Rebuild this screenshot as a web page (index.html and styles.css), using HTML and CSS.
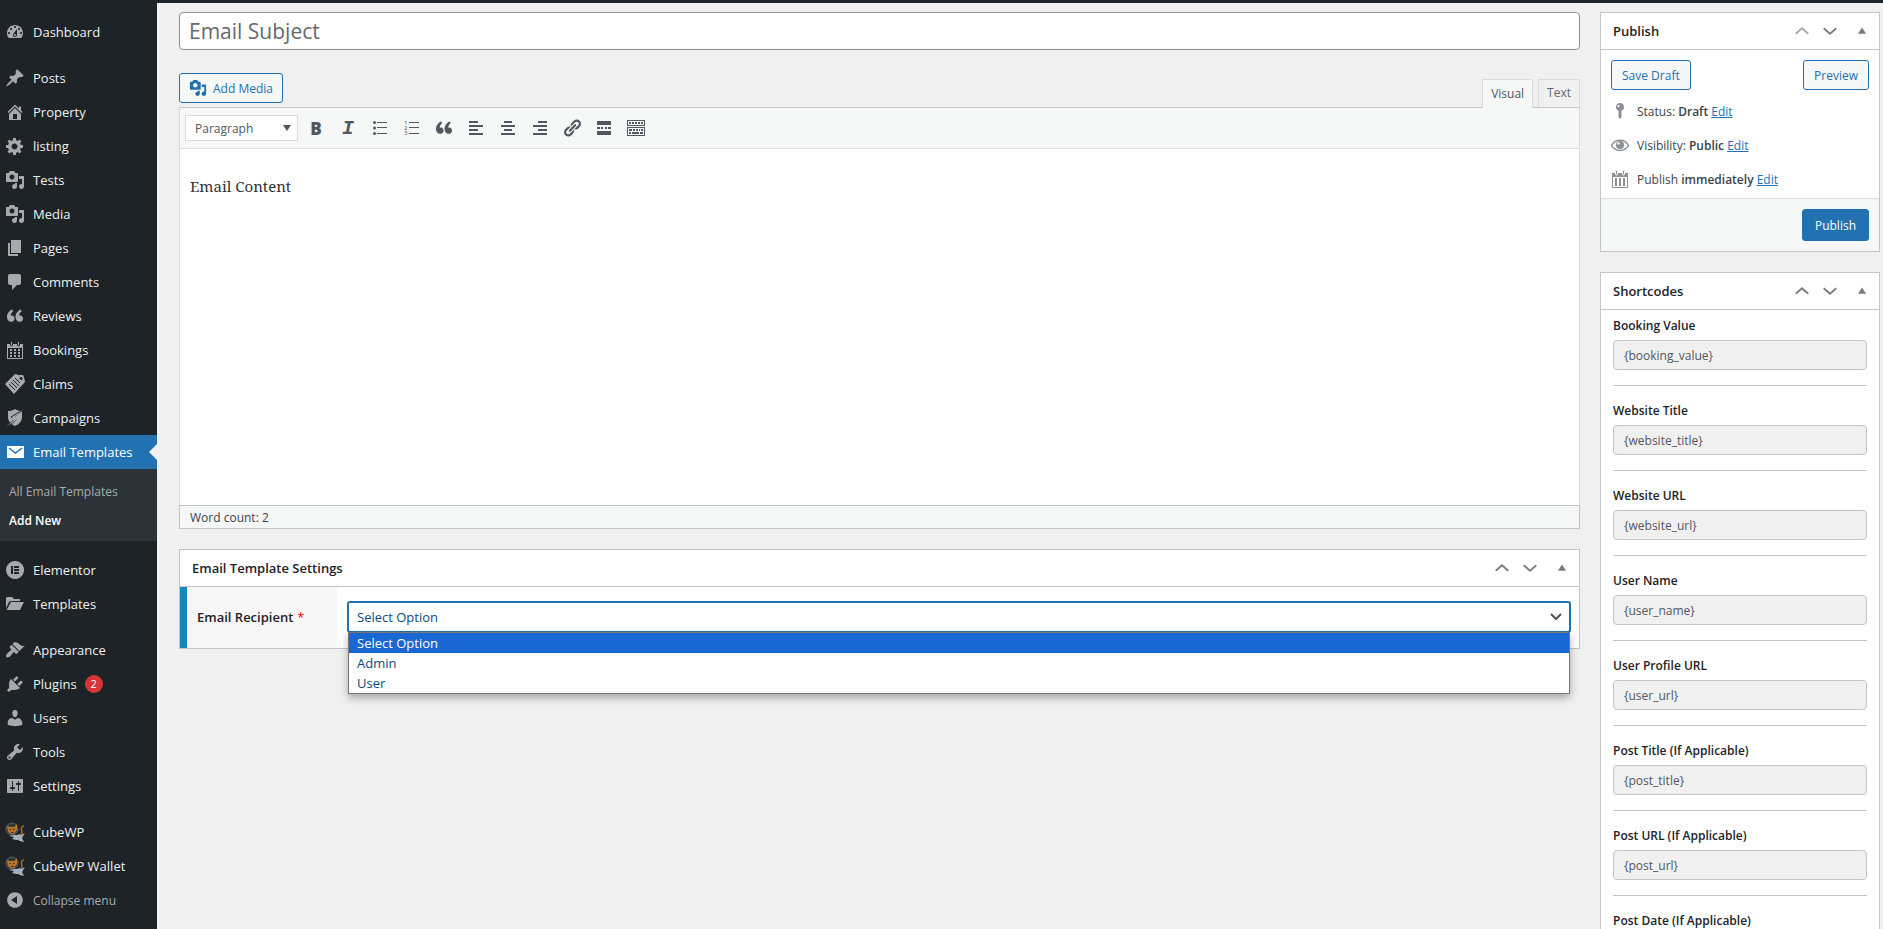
FILE: index.html
```html
<!DOCTYPE html>
<html lang="en">
<head>
    <meta charset="UTF-8">
    <meta name="viewport" content="width=device-width, initial-scale=1.0">
    <title>Add New Email Template</title>
    <link rel="stylesheet" href="styles.css">
</head>
<body>

<!-- shared icons -->
<svg class="sprite" aria-hidden="true">
    <symbol id="i-media" viewBox="0 0 20 20"><path d="M13 11V4c0-.55-.45-1-1-1h-1.67L9 1H5L3.67 3H2c-.55 0-1 .45-1 1v7c0 .55.45 1 1 1h10c.55 0 1-.45 1-1zM7 4.5c1.38 0 2.5 1.12 2.5 2.5S8.38 9.5 7 9.5 4.5 8.38 4.5 7 5.62 4.5 7 4.5zM14 6h5v10.5c0 1.38-1.12 2.5-2.5 2.5S14 17.88 14 16.5s1.12-2.5 2.5-2.5c.17 0 .34.02.5.05V9h-3V6zm-4 8.05V13h2v3.5c0 1.38-1.12 2.5-2.5 2.5S7 17.88 7 16.5 8.12 14 9.5 14c.17 0 .34.02.5.05z"/></symbol>
    <symbol id="i-quote" viewBox="0 0 20 20"><path d="M9.5 12.7c0-.87-.24-1.61-.72-2.22-.73-.92-2.14-1.03-2.96-.85-.3-1.6.9-3.5 2.6-4.4L7 3.6C4 5 1.7 8 2 11.6c.3 2.6 1.8 4.2 4 4.2 1 0 1.83-.29 2.48-.88.66-.59 1.02-1.22 1.02-2.22zm8.5 0c0-.87-.24-1.61-.72-2.22-.73-.92-2.14-1.03-2.96-.85-.3-1.6.9-3.5 2.6-4.4L15.5 3.6c-3 1.4-5.3 4.4-5 8 .3 2.6 1.8 4.2 4 4.2 1 0 1.83-.29 2.48-.88.66-.59 1.02-1.22 1.02-2.22z"/></symbol>
    <symbol id="i-cat" viewBox="0 0 20 20">
        <path d="M0 12l4 2 3-1 5 0 3-1 1 1 4-2-3 5 2 4-4-1-2-1-2 0-4-1 2-2-5-1-4-2z" fill="#a5b1ba"/>
        <circle cx="7" cy="7" r="6" fill="#34373b" stroke="#5c6166"/>
        <path d="M2 4l3 1h4l3-3v6l-3 4H6L3 10z" fill="#b9752c"/>
        <path d="M4.5 7.5L6 8M9.5 7L8 8M6.5 10.5h2" stroke="#2b1a0a"/>
        <path d="M16 13c2-2 0-5 .5-7 .3-1.5 1-2 2.5-2" fill="none" stroke="#a86d2c" stroke-width="1.5"/>
    </symbol>
    <symbol id="i-up" viewBox="0 0 20 20"><path d="M3 13l7-6 7 6" fill="none" stroke="currentColor" stroke-width="2"/></symbol>
    <symbol id="i-down" viewBox="0 0 20 20"><path d="M3 7l7 6 7-6" fill="none" stroke="currentColor" stroke-width="2"/></symbol>
    <symbol id="i-toggle" viewBox="0 0 20 20"><path d="M5.5 13L10 6l4.5 7z"/></symbol>
</svg>

<div class="admin">
    <div class="admin-bar"></div>

    <nav class="menu" aria-label="Main menu">
        <ul class="menu-list">
            <li><a href="#"><svg class="icon" viewBox="0 0 20 20"><path fill-rule="evenodd" d="M3.76 16h12.48c1.1-1.37 1.76-3.11 1.76-5 0-4.42-3.58-8-8-8s-8 3.58-8 8c0 1.89.66 3.63 1.76 5zM10 4c.55 0 1 .45 1 1s-.45 1-1 1-1-.45-1-1 .45-1 1-1zM6 6c.55 0 1 .45 1 1s-.45 1-1 1-1-.45-1-1 .45-1 1-1zm8 0c.55 0 1 .45 1 1s-.45 1-1 1-1-.45-1-1 .45-1 1-1zm-5.37 5.55L12 7v6c0 1.1-.9 2-2 2s-2-.9-2-2c0-.57.24-1.08.63-1.45zM4 10c.55 0 1 .45 1 1s-.45 1-1 1-1-.45-1-1 .45-1 1-1zm12 0c.55 0 1 .45 1 1s-.45 1-1 1-1-.45-1-1 .45-1 1-1zm-5 3c0-.55-.45-1-1-1s-1 .45-1 1 .45 1 1 1 1-.45 1-1z"/></svg>Dashboard</a></li>
            <li class="separator"></li>
            <li><a href="#"><svg class="icon" viewBox="0 0 20 20"><path d="M10.44 3.02l1.82-1.82 6.36 6.35-1.83 1.82c-1.05-.68-2.48-.57-3.41.36l-.75.75c-.92.93-1.04 2.35-.35 3.41l-1.83 1.82-2.41-2.41-2.8 2.79c-.42.42-3.38 2.71-3.8 2.29s1.86-3.39 2.28-3.81l2.79-2.79L4.1 9.36l1.83-1.82c1.05.69 2.48.57 3.4-.36l.75-.75c.93-.92 1.05-2.35.36-3.41z"/></svg>Posts</a></li>
            <li><a href="#"><svg class="icon" viewBox="0 0 20 20"><path fill-rule="evenodd" d="M16 8.5l1.53 1.53-1.06 1.06L10 4.6l-6.47 6.49-1.06-1.06L10 2.5l4 4v-2h2v4zm-6-2.46l6 5.99V18H4v-5.97zM12 17v-5H8v5h4z"/></svg>Property</a></li>
            <li><a href="#"><svg class="icon" viewBox="0 0 20 20"><path d="M18 12h-2.18c-.17.7-.44 1.35-.81 1.93l1.54 1.54-2.1 2.1-1.54-1.54c-.58.36-1.23.63-1.91.79V19H8v-2.18c-.68-.16-1.33-.43-1.91-.79l-1.54 1.54-2.12-2.12 1.54-1.54c-.36-.58-.63-1.23-.79-1.91H1V9.03h2.17c.16-.7.44-1.35.8-1.94L2.43 5.55l2.1-2.1 1.54 1.54c.58-.37 1.24-.64 1.93-.81V2h3v2.18c.68.16 1.33.43 1.91.79l1.54-1.54 2.12 2.12-1.54 1.54c.36.59.64 1.24.8 1.94H18V12zm-8.5 1.5c1.66 0 3-1.34 3-3s-1.34-3-3-3-3 1.34-3 3 1.34 3 3 3z"/></svg>listing</a></li>
            <li><a href="#"><svg class="icon"><use href="#i-media"/></svg>Tests</a></li>
            <li><a href="#"><svg class="icon"><use href="#i-media"/></svg>Media</a></li>
            <li><a href="#"><svg class="icon" viewBox="0 0 20 20"><path d="M6 15V2h10v13H6zm-1 1h8v2H3V5h2v11z"/></svg>Pages</a></li>
            <li><a href="#"><svg class="icon" viewBox="0 0 20 20"><path d="M5 2h9c1.1 0 2 .9 2 2v7c0 1.1-.9 2-2 2h-2l-5 5v-5H5c-1.1 0-2-.9-2-2V4c0-1.1.9-2 2-2z"/></svg>Comments</a></li>
            <li><a href="#"><svg class="icon"><use href="#i-quote"/></svg>Reviews</a></li>
            <li><a href="#"><svg class="icon" viewBox="0 0 20 20"><path fill-rule="evenodd" d="M2 4h16v15H2zm1 4v10h14V8zm2 1h2v2H5zm4 0h2v2H9zm4 0h2v2h-2zM5 12h2v2H5zm4 0h2v2H9zm4 0h2v2h-2zM5 15h2v2H5zm4 0h2v2H9zm4 0h2v2h-2z"/><rect x="5.5" y="1.5" width="2" height="4.5" rx="1" stroke="#1d2327"/><rect x="12.5" y="1.5" width="2" height="4.5" rx="1" stroke="#1d2327"/></svg>Bookings</a></li>
            <li><a href="#"><svg class="icon" viewBox="0 0 20 20"><path fill-rule="evenodd" d="M0 10l9-9 2-1 2 1h5l1 2 1 5L9 20zM16 3a1.5 1.5 0 1 0 .1 0z"/><path d="M4 10l6 6M6 8l6 6M8 6l6 6M10 4l5 5" stroke="#1d2327"/></svg>Claims</a></li>
            <li><a href="#"><svg class="icon" viewBox="0 0 20 20"><path d="M10 1c2 1.5 4.5 2 7 2v6c0 4-3 7.5-7 9-4-1.5-7-5-7-9V3c2.5 0 5-.5 7-2z"/><path d="M18 2L8 10l4 1-9 8M16 3L6 9l4 2-8 7" fill="none" stroke="#1d2327"/><path d="M19 1l-9 8 4 1L1 19l8-7-4-1z"/></svg>Campaigns</a></li>
            <li class="current">
                <a href="#"><svg class="icon" viewBox="0 0 20 20"><path d="M2 4h17v12H2z"/><path d="M4 6l6.5 5L17 6" fill="none" stroke="#2271b1" stroke-width="1.5"/></svg>Email Templates</a>
                <ul class="submenu">
                    <li><a href="#">All Email Templates</a></li>
                    <li><a class="active" href="#" aria-current="page">Add New</a></li>
                </ul>
            </li>
            <li class="separator"></li>
            <li><a href="#"><svg class="icon" viewBox="0 0 20 20"><path fill-rule="evenodd" d="M10 1a9 9 0 1 0 .1 0zM6 6h2v8H6zm3 0h5v2H9zm0 3h5v2H9zm0 3h5v2H9z"/></svg>Elementor</a></li>
            <li><a href="#"><svg class="icon" viewBox="0 0 20 20"><path d="M1 14V4l1-1h5l2 2h6v2H6l-2 1z"/><path d="M1.5 16L6 8h13l-4 8z"/></svg>Templates</a></li>
            <li class="separator"></li>
            <li><a href="#"><svg class="icon" viewBox="0 0 20 20"><path d="M14.48 11.06L7.41 3.99l1.5-1.5c.5-.56 2.3-.47 3.51.32 1.21.8 1.43 1.28 2.91 2.1 1.18.64 2.45 1.26 4.45.85zm-.71.71L6.7 4.7 4.93 6.47c-.39.39-.39 1.02 0 1.41l1.06 1.06c.39.39.39 1.03 0 1.42-.6.6-1.43 1.11-2.21 1.69-.35.26-.7.53-1.01.84C1.43 14.23.4 16.08 1.4 17.07c.99 1 2.84-.03 4.18-1.36.31-.31.58-.66.85-1.02.57-.78 1.08-1.61 1.69-2.21.39-.39 1.02-.39 1.41 0l1.06 1.06c.39.39 1.02.39 1.41 0z"/></svg>Appearance</a></li>
            <li><a href="#"><svg class="icon" viewBox="0 0 20 20"><path d="M13.11 4.36L9.87 7.6 8 5.73l3.24-3.24c.35-.34 1.05-.2 1.56.32.52.51.66 1.21.31 1.55zm-8 1.77l.91-1.12 9.01 9.01-1.19.84c-.71.71-2.63 1.16-3.82 1.16H6.14L4.9 17.26c-.59.59-1.54.59-2.12 0-.59-.58-.59-1.53 0-2.12l1.24-1.24v-3.88c0-1.13.4-3.19 1.09-3.89zm7.26 3.97l3.24-3.24c.34-.35 1.04-.21 1.55.31.52.51.66 1.21.31 1.55l-3.24 3.25z"/></svg>Plugins <span class="count">2</span></a></li>
            <li><a href="#"><svg class="icon" viewBox="0 0 20 20"><path d="M10 9.25c-2.27 0-2.73-3.44-2.73-3.44C7 4.02 7.82 2 9.97 2c2.16 0 2.98 2.02 2.71 3.81 0 0-.41 3.44-2.68 3.44zm0 2.57L12.72 10c2.39 0 4.52 2.33 4.52 4.53v2.49s-3.65 1.13-7.24 1.13c-3.65 0-7.24-1.13-7.24-1.13v-2.49c0-2.25 1.94-4.48 4.47-4.48z"/></svg>Users</a></li>
            <li><a href="#"><svg class="icon" viewBox="0 0 20 20"><path d="M16.68 9.77c-1.34 1.34-3.3 1.67-4.95.99l-5.41 6.52c-.99.99-2.59.99-3.58 0s-.99-2.59 0-3.57l6.52-5.42c-.68-1.65-.35-3.61.99-4.95 1.28-1.28 3.12-1.62 4.72-1.06l-2.89 2.89 2.82 2.82 2.86-2.87c.53 1.58.18 3.39-1.08 4.65zM3.81 16.21c.4.39 1.04.39 1.43 0 .4-.4.4-1.04 0-1.43-.39-.4-1.03-.4-1.43 0-.39.39-.39 1.03 0 1.43z"/></svg>Tools</a></li>
            <li><a href="#"><svg class="icon" viewBox="0 0 20 20"><path d="M18 16V4c0-.55-.45-1-1-1H3c-.55 0-1 .45-1 1v12c0 .55.45 1 1 1h14c.55 0 1-.45 1-1zM8 11h1c.55 0 1 .45 1 1s-.45 1-1 1H8v1.5c0 .28-.22.5-.5.5s-.5-.22-.5-.5V13H6c-.55 0-1-.45-1-1s.45-1 1-1h1V5.5c0-.28.22-.5.5-.5s.5.22.5.5V11zm5-2h-1c-.55 0-1-.45-1-1s.45-1 1-1h1V5.5c0-.28.22-.5.5-.5s.5.22.5.5V7h1c.55 0 1 .45 1 1s-.45 1-1 1h-1v5.5c0 .28-.22.5-.5.5s-.5-.22-.5-.5V9z"/></svg>Settings</a></li>
            <li class="separator"></li>
            <li><a href="#"><svg class="icon"><use href="#i-cat"/></svg>CubeWP</a></li>
            <li><a href="#"><svg class="icon"><use href="#i-cat"/></svg>CubeWP Wallet</a></li>
            <li><button class="collapse" type="button"><svg class="icon" viewBox="0 0 20 20"><path d="M10 2.16c-4.33 0-7.84 3.51-7.84 7.84s3.51 7.84 7.84 7.84 7.84-3.51 7.84-7.84S14.33 2.16 10 2.16zm2 11.72L6.12 9.96 12 6.04v7.84z"/></svg>Collapse menu</button></li>
        </ul>
    </nav>

    <main class="content">
        <div class="main-col">
            <input class="title-input" type="text" placeholder="Email Subject" aria-label="Email Subject">

            <div class="editor">
                <div class="editor-top">
                    <button class="button add-media" type="button"><svg class="icon"><use href="#i-media"/></svg>Add Media</button>
                    <div class="tabs">
                        <button class="tab tab-active" type="button">Visual</button>
                        <button class="tab" type="button">Text</button>
                    </div>
                </div>
                <div class="toolbar">
                    <button class="format" type="button">Paragraph <span class="caret"></span></button>
                    <button class="tool bold" type="button" aria-label="Bold">B</button>
                    <button class="tool italic" type="button" aria-label="Italic">I</button>
                    <button class="tool" type="button" aria-label="Bulleted list"><svg viewBox="0 0 20 20"><circle cx="4.5" cy="4.5" r="1.5"/><circle cx="4.5" cy="10" r="1.5"/><circle cx="4.5" cy="15.5" r="1.5"/><path d="M7 4h10v1H7zM7 9h10v1H7zM7 15h10v1H7z"/></svg></button>
                    <button class="tool" type="button" aria-label="Numbered list"><svg viewBox="0 0 20 20"><text x="2" y="7" font-size="6">1</text><text x="2" y="12" font-size="6">2</text><text x="2" y="17" font-size="6">3</text><path d="M7 4h10v1H7zM7 9h10v1H7zM7 15h10v1H7z"/></svg></button>
                    <button class="tool" type="button" aria-label="Blockquote"><svg><use href="#i-quote"/></svg></button>
                    <button class="tool" type="button" aria-label="Align left"><svg viewBox="0 0 20 20"><path d="M3 3h9v2H3zM3 7h14v2H3zM3 11h9v2H3zM3 15h14v2H3z"/></svg></button>
                    <button class="tool" type="button" aria-label="Align center"><svg viewBox="0 0 20 20"><path d="M6 3h8v2H6zM3 7h14v2H3zM6 11h8v2H6zM3 15h14v2H3z"/></svg></button>
                    <button class="tool" type="button" aria-label="Align right"><svg viewBox="0 0 20 20"><path d="M8 3h9v2H8zM3 7h14v2H3zM8 11h9v2H8zM3 15h14v2H3z"/></svg></button>
                    <button class="tool" type="button" aria-label="Insert link"><svg viewBox="0 0 20 20"><path d="M17.74 2.76c1.68 1.69 1.68 4.41 0 6.1l-1.53 1.52c-1.12 1.12-2.7 1.47-4.14 1.09l2.62-2.61.76-.77.76-.76c.84-.84.84-2.2 0-3.04-.84-.85-2.2-.85-3.04 0l-.77.76-3.38 3.38c-.37-1.44-.02-3.02 1.1-4.14l1.52-1.53c1.69-1.68 4.42-1.68 6.1 0zM8.59 13.43l5.34-5.34c.42-.42.42-1.1 0-1.52-.44-.43-1.13-.39-1.53 0l-5.33 5.34c-.42.42-.42 1.1 0 1.52.44.43 1.13.39 1.52 0zm-.76 2.29l4.14-4.15c.38 1.44.03 3.02-1.09 4.14l-1.52 1.53c-1.69 1.68-4.41 1.68-6.1 0-1.68-1.68-1.68-4.42 0-6.1l1.53-1.52c1.12-1.12 2.7-1.47 4.14-1.1l-4.14 4.15c-.85.84-.85 2.2 0 3.05.84.84 2.2.84 3.04 0z"/></svg></button>
                    <button class="tool" type="button" aria-label="Read more"><svg viewBox="0 0 20 20"><path d="M3 3h14v4H3zM3 9h3v2H3zM7 9h2v2H7zM11 9h2v2h-2zM14 9h3v2h-3zM3 13h14v4H3z"/></svg></button>
                    <button class="tool" type="button" aria-label="Toolbar toggle"><svg viewBox="0 0 20 20"><path fill-rule="evenodd" d="M1 2h18v6H1zm1 1v4h16V3zM1 9h18v9H1zm1 1v7h16v-7z"/><path d="M3 4h2v2H3zM6 4h2v2H6zM9 4h2v2H9zM12 4h2v2h-2zM15 4h2v2h-2zM3 11h3v2H3zM7 11h2v2H7zM10 11h2v2h-2zM13 11h1v2h-1zM15 11h2v2h-2zM3 14h2v2H3zM6 14h7v2H6zM14 14h3v2h-3z"/></svg></button>
                </div>
                <div class="editor-body">Email Content</div>
                <div class="status-bar">Word count: 2</div>
            </div>

            <section class="postbox">
                <div class="postbox-header">
                    <h2>Email Template Settings</h2>
                    <button type="button" aria-label="Move up"><svg><use href="#i-up"/></svg></button>
                    <button type="button" aria-label="Move down"><svg><use href="#i-down"/></svg></button>
                    <button class="toggle" type="button" aria-label="Toggle panel"><svg><use href="#i-toggle"/></svg></button>
                </div>
                <div class="field-row">
                    <label class="field-label" for="recipient">Email Recipient <span class="required">*</span></label>
                    <div class="field-input">
                        <select id="recipient">
                            <option>Select Option</option>
                            <option>Admin</option>
                            <option>User</option>
                        </select>
                        <ul class="dropdown" role="listbox" aria-label="Email Recipient">
                            <li class="selected" role="option" aria-selected="true">Select Option</li>
                            <li role="option">Admin</li>
                            <li role="option">User</li>
                        </ul>
                    </div>
                </div>
            </section>
        </div>

        <aside class="side-col">
            <section class="postbox">
                <div class="postbox-header">
                    <h2>Publish</h2>
                    <button class="disabled" type="button" aria-label="Move up"><svg><use href="#i-up"/></svg></button>
                    <button type="button" aria-label="Move down"><svg><use href="#i-down"/></svg></button>
                    <button class="toggle" type="button" aria-label="Toggle panel"><svg><use href="#i-toggle"/></svg></button>
                </div>
                <div class="publish-actions">
                    <button class="button" type="button">Save Draft</button>
                    <button class="button" type="button">Preview</button>
                </div>
                <ul class="publish-info">
                    <li><svg class="icon" viewBox="0 0 20 20"><path fill-rule="evenodd" d="M10 2a4 4 0 0 1 1.5 7.7V16L10 18l-1.5-2V9.7A4 4 0 0 1 10 2zM8.5 4a1 1 0 1 0 .1 0z"/></svg><span>Status: <b>Draft</b> <a href="#">Edit</a></span></li>
                    <li><svg class="icon" viewBox="0 0 20 20"><path d="M1.5 10.5C5 3.5 15 3.5 18.5 10.5 15 17 5 17 1.5 10.5z" fill="none" stroke="currentColor" stroke-width="1.5"/><circle cx="10" cy="10" r="4"/><circle cx="8.5" cy="8.5" r="1.2" fill="#fff"/></svg><span>Visibility: <b>Public</b> <a href="#">Edit</a></span></li>
                    <li><svg class="icon" viewBox="0 0 20 20"><path fill-rule="evenodd" d="M2 4h16v15H2zm1 4v10h14V8zm2 1h2v8H5zm4 0h2v8H9zm4 0h2v8h-2z"/><rect x="5.5" y="1.5" width="2" height="4.5" rx="1" stroke="#fff"/><rect x="12.5" y="1.5" width="2" height="4.5" rx="1" stroke="#fff"/></svg><span>Publish <b>immediately</b> <a href="#">Edit</a></span></li>
                </ul>
                <div class="publish-footer">
                    <button class="button button-primary" type="button">Publish</button>
                </div>
            </section>

            <section class="postbox">
                <div class="postbox-header">
                    <h2>Shortcodes</h2>
                    <button type="button" aria-label="Move up"><svg><use href="#i-up"/></svg></button>
                    <button type="button" aria-label="Move down"><svg><use href="#i-down"/></svg></button>
                    <button class="toggle" type="button" aria-label="Toggle panel"><svg><use href="#i-toggle"/></svg></button>
                </div>
                <div class="shortcodes">
                    <div class="shortcode">
                        <label for="sc_booking_value">Booking Value</label>
                        <input type="text" id="sc_booking_value" value="{booking_value}" readonly>
                    </div>
                    <div class="shortcode">
                        <label for="sc_website_title">Website Title</label>
                        <input type="text" id="sc_website_title" value="{website_title}" readonly>
                    </div>
                    <div class="shortcode">
                        <label for="sc_website_url">Website URL</label>
                        <input type="text" id="sc_website_url" value="{website_url}" readonly>
                    </div>
                    <div class="shortcode">
                        <label for="sc_user_name">User Name</label>
                        <input type="text" id="sc_user_name" value="{user_name}" readonly>
                    </div>
                    <div class="shortcode">
                        <label for="sc_user_url">User Profile URL</label>
                        <input type="text" id="sc_user_url" value="{user_url}" readonly>
                    </div>
                    <div class="shortcode">
                        <label for="sc_post_title">Post Title (If Applicable)</label>
                        <input type="text" id="sc_post_title" value="{post_title}" readonly>
                    </div>
                    <div class="shortcode">
                        <label for="sc_post_url">Post URL (If Applicable)</label>
                        <input type="text" id="sc_post_url" value="{post_url}" readonly>
                    </div>
                    <div class="shortcode">
                        <label for="sc_post_date">Post Date (If Applicable)</label>
                        <input type="text" id="sc_post_date" readonly>
                    </div>
                </div>
            </section>
        </aside>
    </main>
</div>

</body>
</html>
```
FILE: styles.css
```css
* {
    box-sizing: border-box;
}
body {
    margin: 0;
    background-color: #f0f0f1;
    color: #3c434a;
    font-family: "Open Sans", "Noto Sans", sans-serif;
    font-size: 12px;
}
button,
input,
select {
    font-family: inherit;
    font-size: inherit;
}
button {
    cursor: pointer;
}
ul {
    list-style: none;
    margin: 0;
    padding: 0;
}
svg {
    fill: currentColor;
}
.sprite {
    display: none;
}
.icon {
    width: 20px;
    height: 20px;
    flex: none;
}
.admin {
    display: grid;
    grid-template-columns: 157px 1fr;
    grid-template-rows: 3px 1fr;
    height: 100vh;
    overflow: hidden;
}
.admin-bar {
    grid-column: 1 / 3;
    background-color: #1d2327;
}

/* left menu */
.menu {
    background-color: #1d2327;
    padding-top: 12px;
}
.menu-list > li > a,
.collapse {
    display: flex;
    align-items: center;
    gap: 8px;
    width: 100%;
    height: 34px;
    padding: 0 5px;
    color: #f0f0f1;
    font-size: 13px;
    text-decoration: none;
    white-space: nowrap;
}
.menu-list .icon {
    color: #a7aaad;
}
.menu-list .separator {
    height: 12px;
}
.menu-list > .current > a {
    position: relative;
    background-color: #2271b1;
    color: #fff;
}
.current > a .icon {
    color: #fff;
}
.current > a::after {
    content: "";
    position: absolute;
    right: 0;
    top: 9px;
    border: 8px solid transparent;
    border-right-color: #f0f0f1;
    border-left-width: 0;
}
.submenu {
    background-color: #2c3338;
    padding: 8px 0 6px;
}
.submenu a {
    display: block;
    padding-left: 9px;
    color: #a7aaad;
    line-height: 29px;
    text-decoration: none;
}
.submenu .active {
    color: #fff;
    font-weight: 600;
}
.count {
    width: 18px;
    height: 18px;
    border-radius: 9px;
    background-color: #d63638;
    color: #fff;
    font-size: 11px;
    line-height: 18px;
    text-align: center;
}
.collapse {
    border: none;
    background: none;
    color: #a7aaad;
    font-size: 12px;
}

/* page */
.content {
    display: grid;
    grid-template-columns: 1fr 280px;
    gap: 20px;
    align-items: start;
    min-width: 0;
    padding: 9px 3px 0 22px;
}
.title-input {
    display: block;
    width: 100%;
    height: 38px;
    padding: 0 9px;
    border: 1px solid #8c8f94;
    border-radius: 4px;
    font-size: 21px;
}
.title-input::placeholder {
    color: #646970;
}
.button {
    height: 30px;
    padding: 0 10px;
    border: 1px solid #2271b1;
    border-radius: 3px;
    background-color: #f6f7f7;
    color: #2271b1;
}
.button-primary {
    height: 32px;
    padding: 0 12px;
    background-color: #2271b1;
    color: #fff;
}

/* editor */
.editor {
    margin: 23px 0 20px;
}
.editor-top {
    display: flex;
    justify-content: space-between;
    height: 34px;
}
.add-media {
    display: flex;
    align-items: center;
    gap: 6px;
    padding: 0 9px;
}
.add-media .icon {
    width: 18px;
    height: 18px;
}
.tabs {
    display: flex;
    align-items: flex-end;
    gap: 5px;
}
.tab {
    height: 28px;
    padding: 0 8px 2px;
    border: 1px solid #dcdcde;
    border-bottom: none;
    background-color: #f0f0f1;
    color: #646970;
}
.tab-active {
    position: relative;
    height: 29px;
    margin-bottom: -1px;
    background-color: #f6f7f7;
    color: #50575e;
}
.toolbar {
    display: flex;
    align-items: center;
    height: 42px;
    padding: 0 5px;
    border: 1px solid #dcdcde;
    border-top-color: #c3c4c7;
    background-color: #f6f7f7;
}
.format {
    display: flex;
    justify-content: space-between;
    align-items: center;
    width: 113px;
    height: 26px;
    margin-right: 2px;
    padding: 0 6px 0 9px;
    border: 1px solid #dcdcde;
    background-color: #fff;
    color: #50575e;
}
.caret {
    border: 4px solid transparent;
    border-top: 6px solid #50575e;
    border-bottom: none;
}
.tool {
    display: flex;
    justify-content: center;
    align-items: center;
    width: 32px;
    height: 28px;
    padding: 0;
    border: none;
    background: none;
    color: #50575e;
}
.tool svg {
    width: 20px;
    height: 20px;
}
.bold {
    font-size: 17px;
    font-weight: 800;
}
.italic {
    font-family: "Liberation Mono", monospace;
    font-size: 20px;
    font-style: italic;
    font-weight: 700;
}
.editor-body {
    height: 356px;
    padding: 25px 10px;
    border: 1px solid #dcdcde;
    border-width: 0 1px;
    background-color: #fff;
    color: #333;
    font-family: "Noto Serif", "Liberation Serif", serif;
    font-size: 15px;
    line-height: 24px;
}
.status-bar {
    height: 24px;
    padding: 0 10px;
    border: 1px solid #c3c4c7;
    background-color: #f6f7f7;
    line-height: 23px;
}

/* boxes */
.postbox {
    margin-bottom: 20px;
    border: 1px solid #c3c4c7;
    background-color: #fff;
}
.postbox-header {
    display: flex;
    align-items: center;
    height: 37px;
    padding-right: 3px;
    border-bottom: 1px solid #c3c4c7;
}
.postbox-header h2 {
    flex: 1;
    margin: 0;
    padding-left: 12px;
    color: #1d2327;
    font-size: 13px;
    font-weight: 600;
}
.postbox-header button {
    width: 28px;
    height: 28px;
    padding: 5px;
    border: none;
    background: none;
    color: #787c82;
}
.postbox-header .toggle {
    margin-left: 4px;
}
.postbox-header .disabled {
    color: #a7aaad;
}
.postbox-header svg {
    display: block;
    width: 18px;
    height: 18px;
}
.field-row {
    display: flex;
    height: 61px;
}
.field-label {
    display: flex;
    align-items: center;
    gap: 4px;
    width: 157px;
    padding: 0 0 2px 10px;
    border-left: 7px solid #1488bb;
    background-color: #f7f7f7;
    color: #1d2327;
    font-size: 13px;
    font-weight: 600;
}
.required {
    color: #f00;
    font-weight: 400;
}
.field-input {
    position: relative;
    flex: 1;
    padding: 14px 8px 0 10px;
}
.field-input select {
    display: block;
    width: 100%;
    height: 32px;
    padding: 0 8px;
    border: 2px solid #2271b1;
    border-radius: 3px;
    appearance: none;
    background: #fff url("data:image/svg+xml,%3Csvg xmlns='http://www.w3.org/2000/svg' viewBox='0 0 16 16'%3E%3Cpath d='M3 5l5 5 5-5' fill='none' stroke='%23555' stroke-width='2'/%3E%3C/svg%3E") no-repeat right 5px center / 16px 16px;
    color: #0a4b78;
    font-size: 13px;
}
.dropdown {
    position: absolute;
    top: 45px;
    left: 11px;
    right: 9px;
    z-index: 1;
    border: 1px solid #767676;
    background-color: #fff;
    box-shadow: 0 4px 8px rgba(0, 0, 0, 0.3);
    color: #0a4b78;
    font-size: 13px;
}
.dropdown li {
    height: 20px;
    padding-left: 8px;
    line-height: 20px;
}
.dropdown .selected {
    background-color: #1967d2;
    color: #fff;
}

/* publish box */
.publish-actions {
    display: flex;
    justify-content: space-between;
    padding: 10px 10px 4px;
}
.publish-info {
    padding-bottom: 2px;
}
.publish-info li {
    display: flex;
    align-items: center;
    gap: 7px;
    height: 34px;
    padding: 0 9px;
}
.publish-info .icon {
    color: #8c8f94;
}
.publish-info b {
    font-weight: 600;
}
.publish-info a {
    color: #2271b1;
}
.publish-footer {
    display: flex;
    justify-content: flex-end;
    padding: 10px;
    border-top: 1px solid #dcdcde;
    background-color: #f6f7f7;
}

/* shortcodes */
.shortcodes {
    padding: 0 12px;
}
.shortcode {
    padding: 15px 0;
    border-bottom: 1px solid #c3c4c7;
}
.shortcode:first-child {
    padding-top: 6px;
}
.shortcode label {
    display: block;
    height: 24px;
    color: #1d2327;
    font-weight: 600;
    line-height: 20px;
}
.shortcode input {
    display: block;
    width: 100%;
    height: 30px;
    padding: 0 10px;
    border: 1px solid #c3c4c7;
    border-radius: 4px;
    background-color: #f0f0f1;
    color: #50575e;
}
```
